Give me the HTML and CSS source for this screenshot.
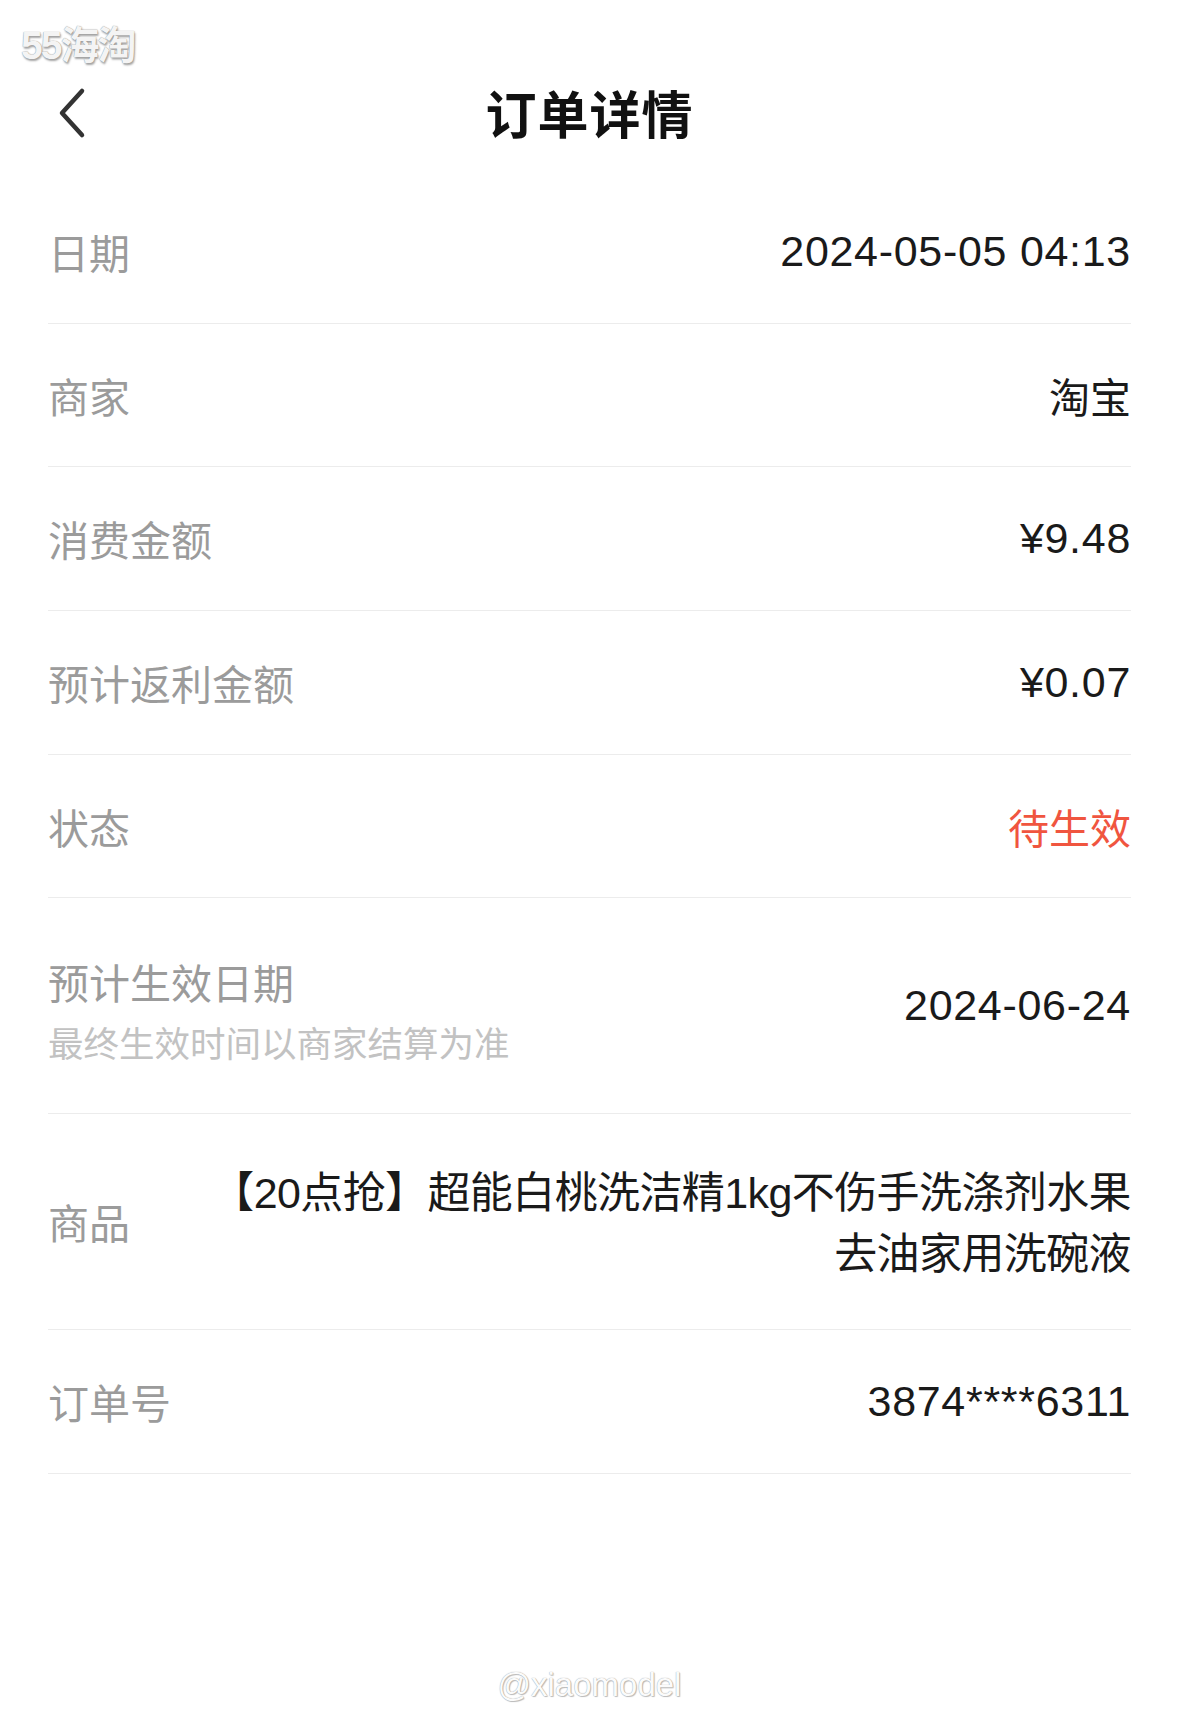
FILE: index.html
```html
<!DOCTYPE html>
<html lang="zh-CN">
<head>
    <meta charset="UTF-8">
    <meta name="viewport" content="width=device-width, initial-scale=1.0">
    <title>订单详情</title>
    <link rel="stylesheet" href="styles.css">
</head>
<body>

    <div class="mark-top">55海淘</div>

    <!-- 顶部导航 -->
    <div class="status-bar"></div>
    <div class="nav">
        <a class="back" href="#">
            <svg width="30" height="52" viewBox="0 0 30 52">
                <path d="M24 4 L4 26 L24 48" fill="none" stroke="#333" stroke-width="4.5" stroke-linecap="round" stroke-linejoin="round"/>
            </svg>
        </a>
        <h1 class="title">订单详情</h1>
        <span></span>
    </div>

    <!-- 订单信息 -->
    <div class="list">
        <div class="row">
            <span class="label">日期</span>
            <span class="value">2024-05-05 04:13</span>
        </div>
        <div class="row">
            <span class="label">商家</span>
            <span class="value cjk">淘宝</span>
        </div>
        <div class="row">
            <span class="label">消费金额</span>
            <span class="value">¥9.48</span>
        </div>
        <div class="row">
            <span class="label">预计返利金额</span>
            <span class="value">¥0.07</span>
        </div>
        <div class="row">
            <span class="label">状态</span>
            <span class="value cjk status">待生效</span>
        </div>
        <div class="row row-tall">
            <div class="label-group">
                <span class="label">预计生效日期</span>
                <span class="sub-label">最终生效时间以商家结算为准</span>
            </div>
            <span class="value">2024-06-24</span>
        </div>
        <div class="row row-tall">
            <span class="label">商品</span>
            <span class="value product">【20点抢】超能白桃洗洁精1kg不伤手洗涤剂水果<br>去油家用洗碗液</span>
        </div>
        <div class="row">
            <span class="label">订单号</span>
            <span class="value">3874****6311</span>
        </div>
    </div>

    <div class="mark-bottom">@xiaomodel</div>

</body>
</html>
```

FILE: styles.css
```css
body {
    margin: 0;
    background-color: #fff;
    font-family: "Liberation Sans", "Noto Sans CJK SC", sans-serif;
    position: relative;
    min-height: 1733px;
}

.status-bar {
    height: 44px;
}

.nav {
    height: 136px;
    display: grid;
    grid-template-columns: 1fr auto 1fr;
    align-items: center;
    padding: 0 48px;
}

.back {
    display: flex;
    align-items: center;
    margin-left: 10px;
    margin-top: 2px;
}

.title {
    margin: 0;
    font-family: "Noto Sans CJK SC", sans-serif;
    font-size: 51px;
    font-weight: 700;
    color: #111;
    letter-spacing: 1px;
}

.list {
    margin: 0 48px;
}

.row {
    display: flex;
    align-items: center;
    justify-content: space-between;
    min-height: 142.7px;
    border-bottom: 1px solid #ececec;
}

.row-tall {
    min-height: 215px;
}

.label {
    flex-shrink: 0;
    font-family: "Noto Sans CJK SC", sans-serif;
    font-size: 41px;
    line-height: 59px;
    color: #9b9b9b;
}

.label-group {
    display: flex;
    flex-direction: column;
    gap: 6px;
    padding-top: 8px;
}

.sub-label {
    font-family: "Noto Sans CJK SC", sans-serif;
    font-size: 35.5px;
    line-height: 50px;
    color: #c2c2c2;
}

.value {
    flex: 1;
    margin-left: 40px;
    text-align: right;
    font-size: 43px;
    line-height: 59px;
    letter-spacing: 0.7px;
    color: #1a1a1a;
}

.cjk {
    font-family: "Noto Sans CJK SC", sans-serif;
    font-size: 41px;
    letter-spacing: 0;
}

.status {
    color: #f0553f;
}

.product {
    line-height: 61px;
    padding-top: 4px;
    letter-spacing: -0.6px;
}

.mark-top {
    position: absolute;
    left: 21px;
    top: 14px;
    font-size: 39px;
    font-weight: 700;
    color: #f4f4f4;
    letter-spacing: -2px;
    text-shadow: 0 0 1px #777, 1px 2px 2px rgba(0, 0, 0, 0.35);
}

.mark-bottom {
    position: absolute;
    left: 0;
    right: 0;
    top: 1666px;
    text-align: center;
    font-size: 33px;
    color: #fbfbfb;
    text-shadow: 0 0 1px #888, 1px 1px 1px rgba(0, 0, 0, 0.25);
}
```
